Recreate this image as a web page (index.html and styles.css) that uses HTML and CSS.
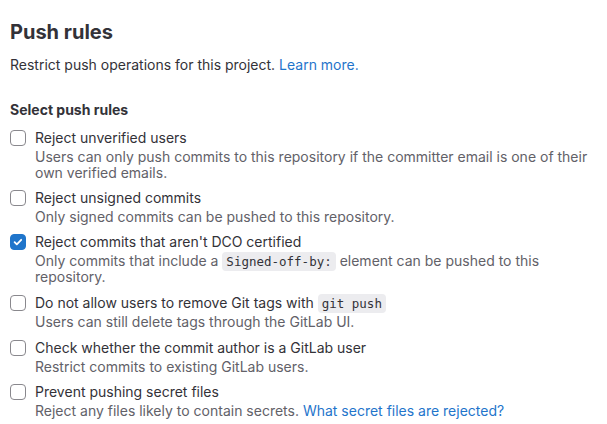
FILE: index.html
```html
<!DOCTYPE html>
<html>
<head>
<meta charset="utf-8">
<link rel="stylesheet" href="styles.css">
</head>
<body>
<section class="settings">
  <h2 class="title">Push rules</h2>
  <p class="intro">Restrict push operations for this project. <a href="#" class="link">Learn more.</a></p>
  <fieldset class="rules">
    <legend class="legend">Select push rules</legend>
    <div class="rule">
      <span class="box"></span>
      <div class="rule-text">
        <div class="label">Reject unverified users</div>
        <div class="help">Users can only push commits to this repository if the committer email is one of their own verified emails.</div>
      </div>
    </div>
    <div class="rule">
      <span class="box"></span>
      <div class="rule-text">
        <div class="label">Reject unsigned commits</div>
        <div class="help">Only signed commits can be pushed to this repository.</div>
      </div>
    </div>
    <div class="rule has-code">
      <span class="box checked"><svg viewBox="0 0 16 16" width="16" height="16"><path d="M4.6 8.2l2.2 2.2 4.4-4.6" fill="none" stroke="#fff" stroke-width="1.8" stroke-linecap="round" stroke-linejoin="round"/></svg></span>
      <div class="rule-text">
        <div class="label">Reject commits that aren't DCO certified</div>
        <div class="help">Only commits that include a <code class="code">Signed-off-by:</code> element can be pushed to this repository.</div>
      </div>
    </div>
    <div class="rule has-code">
      <span class="box"></span>
      <div class="rule-text">
        <div class="label">Do not allow users to remove Git tags with <code class="code">git push</code></div>
        <div class="help">Users can still delete tags through the GitLab UI.</div>
      </div>
    </div>
    <div class="rule">
      <span class="box"></span>
      <div class="rule-text">
        <div class="label">Check whether the commit author is a GitLab user</div>
        <div class="help">Restrict commits to existing GitLab users.</div>
      </div>
    </div>
    <div class="rule">
      <span class="box"></span>
      <div class="rule-text">
        <div class="label">Prevent pushing secret files</div>
        <div class="help">Reject any files likely to contain secrets. <a href="#" class="link">What secret files are rejected?</a></div>
      </div>
    </div>
  </fieldset>
</section>
</body>
</html>
```

FILE: styles.css
```css
* { box-sizing: border-box; }
html, body { margin: 0; padding: 0; background: #fff; }
body {
  font-family: "Inter", "Liberation Sans", sans-serif;
  font-size: 14px;
  color: #333238;
}
.settings { padding: 18px 10px 0 10px; }
.title {
  margin: 0;
  font-size: 20px;
  line-height: 28px;
  font-weight: 700;
  color: #333238;
}
.intro {
  margin: 9px 0 0 0;
  line-height: 20px;
  color: #333238;
}
.link { color: #1f75cb; text-decoration: none; }
.rules { border: 0; margin: 0; padding: 0; min-width: 0; }
.legend {
  padding: 0;
  margin-top: 25px;
  font-weight: 700;
  line-height: 20px;
  float: left;
  width: 100%;
  margin-bottom: 8px;
}
.rule {
  clear: both;
  display: flex;
  gap: 9px;
  margin-bottom: 7px;
}
.rule.has-code { margin-bottom: 8px; }
.box {
  flex: none;
  width: 16px;
  height: 16px;
  margin-top: 2px;
  border: 1px solid #89888d;
  border-radius: 4px;
  background: #fff;
  display: flex;
}
.box.checked { background: #1f75cb; border-color: #1f75cb; }
.box.checked svg { margin: -1px; }
.label { line-height: 20px; color: #333238; }
.help { line-height: 16px; color: #626168; margin-top: 1px; }
.code {
  font-family: "DejaVu Sans Mono", "Liberation Mono", monospace;
  font-size: 12.5px;
  line-height: 1;
  background: #ececef;
  border-radius: 4px;
  padding: 2px 4px;
  color: #333238;
}
```
